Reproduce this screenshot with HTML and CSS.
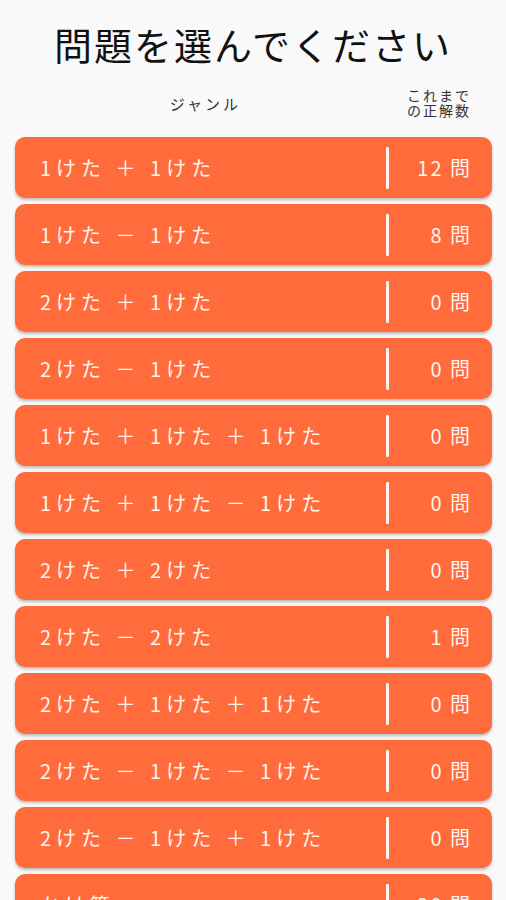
FILE: index.html
```html
<!DOCTYPE html>
<html lang="ja">
<head>
    <meta charset="UTF-8">
    <meta name="viewport" content="width=device-width, initial-scale=1.0">
    <title>問題を選んでください</title>
    <link rel="stylesheet" href="styles.css">
</head>
<body>
    <h1 class="title">問題を選んでください</h1>

    <div class="list-head">
        <div class="head-genre">ジャンル</div>
        <div class="head-count">これまで<br>の正解数</div>
    </div>

    <div class="list">
        <div class="row"><div class="genre">1けた ＋ 1けた</div><div class="sep"></div><div class="count">12 問</div></div>
        <div class="row"><div class="genre">1けた － 1けた</div><div class="sep"></div><div class="count">8 問</div></div>
        <div class="row"><div class="genre">2けた ＋ 1けた</div><div class="sep"></div><div class="count">0 問</div></div>
        <div class="row"><div class="genre">2けた － 1けた</div><div class="sep"></div><div class="count">0 問</div></div>
        <div class="row"><div class="genre">1けた ＋ 1けた ＋ 1けた</div><div class="sep"></div><div class="count">0 問</div></div>
        <div class="row"><div class="genre">1けた ＋ 1けた － 1けた</div><div class="sep"></div><div class="count">0 問</div></div>
        <div class="row"><div class="genre">2けた ＋ 2けた</div><div class="sep"></div><div class="count">0 問</div></div>
        <div class="row"><div class="genre">2けた － 2けた</div><div class="sep"></div><div class="count">1 問</div></div>
        <div class="row"><div class="genre">2けた ＋ 1けた ＋ 1けた</div><div class="sep"></div><div class="count">0 問</div></div>
        <div class="row"><div class="genre">2けた － 1けた － 1けた</div><div class="sep"></div><div class="count">0 問</div></div>
        <div class="row"><div class="genre">2けた － 1けた ＋ 1けた</div><div class="sep"></div><div class="count">0 問</div></div>
        <div class="row"><div class="genre">かけ算</div><div class="sep"></div><div class="count">20 問</div></div>
    </div>
</body>
</html>
```

FILE: styles.css
```css
body {
    margin: 0;
    background: #f9f9f9;
    font-family: "Noto Sans CJK JP", "Noto Sans", sans-serif;
    color: #111;
    overflow: hidden;
}

.title {
    margin: 0;
    padding-top: 19px;
    font-size: 38px;
    font-weight: normal;
    line-height: 50px;
    letter-spacing: 2px;
    text-align: center;
}

.list-head {
    display: flex;
    align-items: center;
    margin: 18px 14px 0 15px;
    height: 32px;
    color: #333;
}

.head-genre {
    flex: 1;
    padding-left: 10px;
    text-align: center;
    font-size: 15px;
    letter-spacing: 3px;
}

.head-count {
    width: 106px;
    text-align: center;
    font-size: 14px;
    line-height: 15px;
    letter-spacing: 2px;
}

.list {
    display: flex;
    flex-direction: column;
    gap: 6px;
    margin: 18px 14px 0 15px;
}

.row {
    display: flex;
    align-items: center;
    flex-shrink: 0;
    height: 61px;
    background: #ff6b3a;
    border-radius: 10px;
    box-shadow: 0 2px 3px rgba(0, 0, 0, 0.25);
    color: #fff4ee;
    font-size: 20px;
}

.genre {
    flex: 1;
    padding-left: 25px;
    letter-spacing: 5px;
    white-space: nowrap;
}

.sep {
    width: 3px;
    height: 42px;
    background: #fff4ee;
    border-radius: 1px;
}

.count {
    width: 83px;
    padding-right: 20px;
    text-align: right;
    letter-spacing: 2px;
    white-space: nowrap;
}
```
